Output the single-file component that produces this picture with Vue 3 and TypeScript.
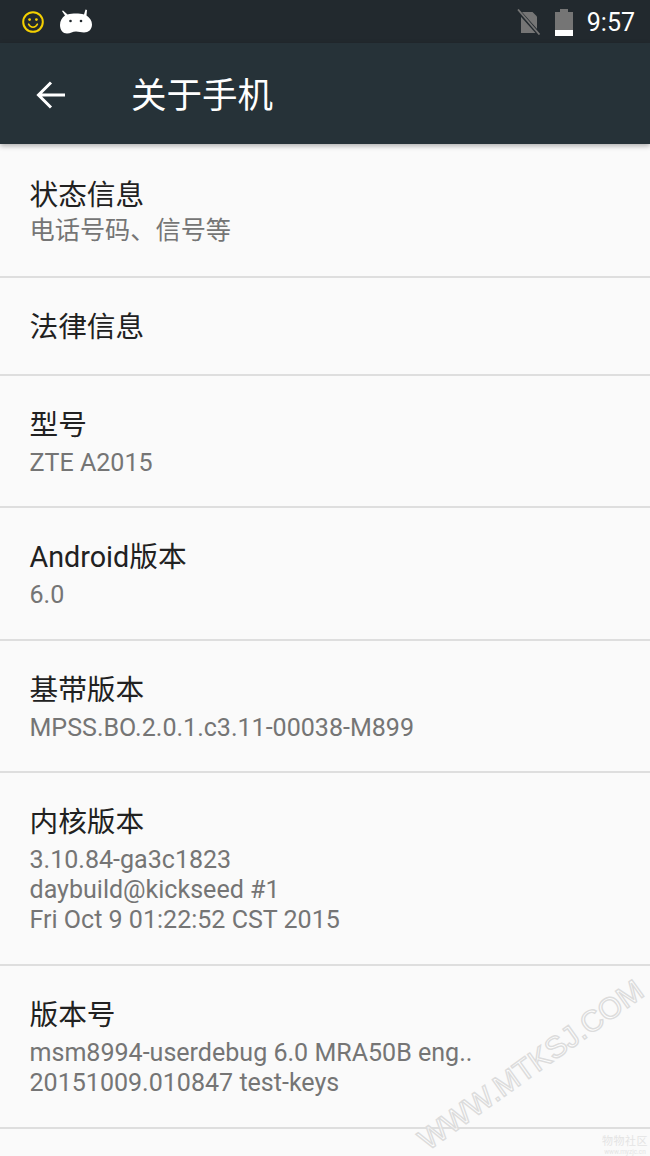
<script setup lang="ts">
interface Row { title: string; lines: string[]; cls: string; cjk?: boolean }
const rows: Row[] = [
  { title: '状态信息', lines: ['电话号码、信号等'], cls: 'r132', cjk: true },
  { title: '法律信息', lines: [], cls: 'r98' },
  { title: '型号', lines: ['ZTE A2015'], cls: 'r132' },
  { title: 'Android版本', lines: ['6.0'], cls: 'r133' },
  { title: '基带版本', lines: ['MPSS.BO.2.0.1.c3.11-00038-M899'], cls: 'r132' },
  { title: '内核版本', lines: ['3.10.84-ga3c1823', 'daybuild@kickseed #1', 'Fri Oct 9 01:22:52 CST 2015'], cls: 'r193' },
  { title: '版本号', lines: ['msm8994-userdebug 6.0 MRA50B eng..', '20151009.010847 test-keys'], cls: 'r163' },
]
</script>

<template>
  <div class="screen">
    <div class="status">
      <div class="left">
        <svg width="24" height="24" viewBox="0 0 24 24" class="smile">
          <circle cx="12" cy="12" r="9.8" fill="none" stroke="#f5d000" stroke-width="2" />
          <circle cx="8.6" cy="9.6" r="1.4" fill="#f5d000" />
          <circle cx="15.4" cy="9.6" r="1.4" fill="#f5d000" />
          <path d="M7.6 14.2c1 2 2.6 3 4.4 3s3.4-1 4.4-3" fill="none" stroke="#f5d000" stroke-width="1.6" stroke-linecap="round" />
        </svg>
        <svg width="32" height="25" viewBox="0 0 32 25" class="droid">
          <path d="M3 1.500L7.500 5.500C10 4.700 13 4.500 16 4.500s5.500.2 8 1L25.500 0.500l1.500.5-.5 5.500C29.500 8.500 32 11.500 32 15.500c0 5-3.500 8-8 8-3 0-5-1-8-1-3.500 0-5.500 2-9 2-4 0-7-3.500-7-8.500 0-4 2-7.500 5-9.500L2 2z" fill="#fff" />
          <circle cx="10.500" cy="12" r="1.300" fill="#22292e" />
          <circle cx="21" cy="12" r="1.300" fill="#22292e" />
        </svg>
      </div>
      <div class="right">
        <svg width="26" height="26" viewBox="0 0 26 26" class="sim">
          <path d="M6 3h11.500L22 7.500V24H6z" fill="#757575" />
          <path d="M2.500 1l21 23.500" stroke="#22292e" stroke-width="4" />
          <path d="M3 0.500l21.500 25" stroke="#757575" stroke-width="1.800" />
        </svg>
        <svg width="20" height="28" viewBox="0 0 20 28" class="battery">
          <path d="M1 4h5V1h8v3h5v24H1z" fill="#757575" />
          <rect x="1" y="22" width="18" height="6" fill="#fff" />
        </svg>
        <span class="time">9:57</span>
      </div>
    </div>
    <header class="bar">
      <svg width="30" height="30" viewBox="0 0 30 30" class="back">
        <path d="M29 15H3M15 2.500L2.500 15 15 27.500" fill="none" stroke="#fff" stroke-width="3" />
      </svg>
      <h1>关于手机</h1>
    </header>
    <main class="list">
      <section v-for="r in rows" :key="r.title" class="row" :class="r.cls">
        <div class="title">{{ r.title }}</div>
        <div v-for="l in r.lines" :key="l" class="sub" :class="{ cjk: r.cjk }">{{ l }}</div>
      </section>
    </main>
    <div class="mark">WWW.MTKSJ.COM</div>
    <div class="foot"><span class="foot1">物物社区</span><span class="foot2">www.myzjc.cn</span></div>
  </div>
</template>

<style>
html, body { margin: 0; background: #fafafa; }
</style>

<style scoped>
.screen {
  position: relative;
  width: 650px;
  height: 1156px;
  overflow: hidden;
  background: #fafafa;
  font-family: Roboto, "Noto Sans CJK SC", sans-serif;
}
.status {
  height: 43px;
  background: #22292e;
  display: flex;
  justify-content: space-between;
  align-items: center;
}
.left { display: flex; align-items: center; padding-left: 21px; gap: 15px; }
.right { display: flex; align-items: center; padding-right: 15px; }
.sim { margin-right: 13px; }
.battery { margin-right: 13px; }
.time { color: #fff; font-size: 25px; line-height: 30px; padding-top: 3px; }
.bar {
  height: 101px;
  background: #263238;
  display: flex;
  align-items: center;
  box-shadow: 0 2px 5px rgba(0, 0, 0, 0.3);
  position: relative;
}
.back { margin-left: 36px; margin-top: 2px; }
h1 {
  margin: 5px 0 0 65px;
  color: #fff;
  font-size: 35.500px;
  font-weight: 400;
  line-height: 44px;
}
.list { padding-top: 2px; }
.row {
  box-sizing: border-box;
  border-bottom: 2px solid #dedede;
  padding: 27px 30px 0 29.500px;
}
.r132 { height: 132px; }
.r133 { height: 133px; }
.r98 { height: 98px; }
.r193 { height: 193px; }
.r163 { height: 163px; }
.title {
  font-size: 28.700px;
  line-height: 45px;
  color: #212121;
}
.sub {
  font-size: 25.050px;
  line-height: 30px;
  color: #757575;
}
.sub.cjk { margin-top: -2px; font-size: 25.200px; }
.mark {
  position: absolute;
  left: 396px;
  top: 1048px;
  width: 270px;
  text-align: center;
  font-family: "Liberation Sans", sans-serif;
  font-size: 30px;
  font-weight: 400;
  white-space: nowrap;
  color: rgba(255, 255, 255, 0.6);
  -webkit-text-stroke: 1.400px #dcdcdc;
  transform: rotate(-35.600deg);
}
.foot {
  position: absolute;
  right: 2px;
  top: 1135px;
  display: flex;
  flex-direction: column;
  align-items: center;
  color: #e4e4e4;
}
.foot1 { font-size: 11px; line-height: 13px; letter-spacing: 0.500px; }
.foot2 { font-size: 6.500px; line-height: 8px; }
</style>
